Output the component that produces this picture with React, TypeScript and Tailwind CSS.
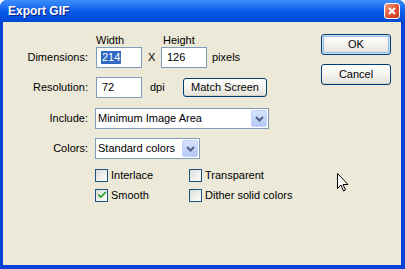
import { Check } from "lucide-react";

const font = "font-['Liberation_Sans',Arial,sans-serif]";

function Field({ value, selected }: { value: string; selected?: boolean }) {
  return (
    <div className="flex h-[21px] w-[46px] items-center border border-[#7f9db9] bg-white pl-[4px]">
      {selected ? (
        <span className="bg-[#316ac5] px-[1px] leading-[13px] text-white">{value}</span>
      ) : (
        <span className="px-[1px] leading-[13px]">{value}</span>
      )}
    </div>
  );
}

function XpButton({ label, width, height, isDefault }: { label: string; width: string; height: string; isDefault?: boolean }) {
  return (
    <button
      type="button"
      className={`${width} ${height} flex items-center justify-center rounded-[3px] border border-[#003c74] bg-gradient-to-b from-white via-[#f4f3ee] to-[#e3e2da] text-black ${
        isDefault ? "shadow-[inset_0_0_0_1px_#cee7ff,inset_0_0_0_2px_#98b8ea]" : "shadow-[inset_0_-1px_0_#d6d0c5]"
      }`}
    >
      {label}
    </button>
  );
}

function Select({ value, width }: { value: string; width: string }) {
  return (
    <div className={`${width} flex h-[21px] items-center justify-between border border-[#7f9db9] bg-white pl-[2px] pr-[1px]`}>
      <span className="leading-[13px]">{value}</span>
      <div className="flex h-[17px] w-[16px] items-center justify-center rounded-[2px] border border-[#c3d3fd] bg-gradient-to-b from-[#d6e3fd] to-[#b4c8f6]">
        <svg width="9" height="6" viewBox="0 0 9 6" aria-hidden>
          <path d="M1 1 L4.5 4.5 L8 1" fill="none" stroke="#4d6185" strokeWidth="2" />
        </svg>
      </div>
    </div>
  );
}

function CheckBox({ label, checked, width }: { label: string; checked?: boolean; width?: string }) {
  return (
    <div className={`flex h-[20px] items-center ${width ?? ""}`}>
      <div className="flex size-[13px] items-center justify-center border border-[#1c5180] bg-gradient-to-br from-[#dcdcd7] to-white">
        {checked && <Check className="size-[10px] text-[#21a121]" strokeWidth={4} />}
      </div>
      <span className="ml-[3px] leading-[13px]">{label}</span>
    </div>
  );
}

export default function App() {
  return (
    <div className={`relative flex h-[269px] w-[405px] flex-col overflow-hidden rounded-t-[7px] bg-[#0842d8] ${font} text-[11px] text-black`}>
      {/* title bar */}
      <div className="flex h-[22px] shrink-0 items-center justify-between bg-gradient-to-b from-[#3d8ffc] via-[#0a5ced] to-[#0048d6] pl-[8px] pr-[5px]">
        <span className="text-[12px] font-bold text-white [text-shadow:1px_1px_0_#0a1e8a]">Export GIF</span>
        <div className="flex size-[16px] items-center justify-center rounded-[3px] border border-white bg-gradient-to-br from-[#f0a080] via-[#e2553a] to-[#c43a1e]">
          <svg width="8" height="8" viewBox="0 0 8 8" aria-hidden>
            <path d="M1 1 L7 7 M7 1 L1 7" stroke="white" strokeWidth="2" />
          </svg>
        </div>
      </div>

      {/* client area */}
      <div className="mx-[3px] mb-[4px] mr-[4px] flex flex-1 bg-[#ece9d8]">
        <div className="flex flex-1 flex-col pt-[11px]">
          <div className="flex h-[14px] items-center pl-[93px]">
            <span className="w-[67px]">Width</span>
            <span>Height</span>
          </div>
          <div className="flex items-center">
            <span className="w-[85px] text-right">Dimensions:</span>
            <div className="ml-[8px] flex items-center">
              <Field value="214" selected />
              <span className="mx-[6px] w-[7px]">X</span>
              <Field value="126" />
              <span className="ml-[5px]">pixels</span>
            </div>
          </div>
          <div className="mt-[9px] flex items-center">
            <span className="w-[85px] text-right">Resolution:</span>
            <div className="ml-[8px] flex items-center">
              <Field value="72" />
              <span className="ml-[8px] w-[33px]">dpi</span>
              <XpButton label="Match Screen" width="w-[84px]" height="h-[19px]" />
            </div>
          </div>
          <div className="mt-[10px] flex items-center">
            <span className="w-[85px] text-right">Include:</span>
            <div className="ml-[7px]">
              <Select value="Minimum Image Area" width="w-[174px]" />
            </div>
          </div>
          <div className="mt-[9px] flex items-center">
            <span className="w-[85px] text-right">Colors:</span>
            <div className="ml-[7px]">
              <Select value="Standard colors" width="w-[105px]" />
            </div>
          </div>
          <div className="mt-[6px] flex flex-col pl-[92px]">
            <div className="flex">
              <CheckBox label="Interlace" width="w-[94px]" />
              <CheckBox label="Transparent" />
            </div>
            <div className="flex">
              <CheckBox label="Smooth" checked width="w-[94px]" />
              <CheckBox label="Dither solid colors" />
            </div>
          </div>
        </div>
        <div className="mr-[10px] flex w-[70px] flex-col gap-[9px] pt-[12px]">
          <XpButton label="OK" width="w-[70px]" height="h-[21px]" isDefault />
          <XpButton label="Cancel" width="w-[70px]" height="h-[21px]" />
        </div>
      </div>

      {/* mouse pointer */}
      <svg className="absolute left-[337px] top-[173px]" width="12" height="20" viewBox="0 0 12 20" aria-hidden>
        <path d="M0.5 0.5 L0.5 15.5 L4 12 L6.5 18 L8.5 17 L6 11.5 L11 11.5 Z" fill="white" stroke="black" strokeWidth="1" />
      </svg>
    </div>
  );
}
